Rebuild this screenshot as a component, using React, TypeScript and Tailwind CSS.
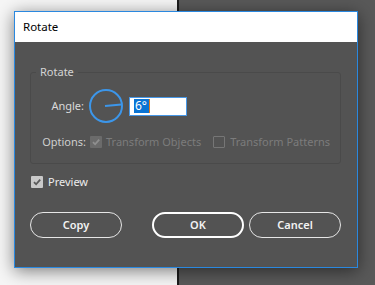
function Check({ tone }: { tone: 'disabled' | 'light' | 'empty' }) {
  if (tone === 'empty') {
    return <span className="block size-3 shrink-0 rounded-[1px] border border-[#767676]" />
  }
  const box = tone === 'light' ? 'bg-[#c9c9c9]' : 'bg-[#6b6b6b]'
  const mark = tone === 'light' ? '#5a5a5a' : '#8f8f8f'
  return (
    <span className={`flex size-3 shrink-0 items-center justify-center rounded-[1px] ${box}`}>
      <svg width="10" height="10" viewBox="0 0 10 10" aria-hidden>
        <path d="M2 5.2 L4.1 7.3 L8.2 2.6" fill="none" stroke={mark} strokeWidth="1.8" />
      </svg>
    </span>
  )
}

function AngleDial() {
  return (
    <svg width="36" height="36" viewBox="0 0 36 36" className="shrink-0" aria-hidden>
      <circle cx="18" cy="18" r="16" fill="none" stroke="#3c96ea" strokeWidth="2" />
      <line x1="17" y1="18.1" x2="33.5" y2="16.4" stroke="#3c96ea" strokeWidth="2" />
    </svg>
  )
}

export default function App() {
  return (
    <div
      className="relative flex h-[285px] w-[375px] overflow-hidden"
      style={{ fontFamily: '"Noto Sans", "Open Sans", sans-serif' }}
    >
      <div className="w-[177px] bg-[#f6f6f6]" />
      <div className="w-[2px] bg-[#1c1c1c]" />
      <div className="flex-1 bg-[#595959]" />

      <div className="absolute left-[14px] top-[11px] flex h-[257px] w-[344px] flex-col border border-[#2a88df] bg-[#535353] shadow-[0_3px_16px_rgba(0,0,0,0.5)]">
        <div className="flex h-[30px] items-center bg-white pl-[8px] text-[11.5px] text-black">Rotate</div>

        <fieldset className="ml-[15px] mt-[23px] w-[311px] rounded-[3px] border border-[#4a4a4a] pb-[14px]">
          <legend className="ml-[5px] px-[4px] text-[11px] leading-[14px] text-[#d4d4d4]">Rotate</legend>

          <div className="mt-[9px] flex items-center">
            <span className="w-[53px] text-right text-[11px] text-[#dadada]">Angle:</span>
            <span className="ml-[4px]">
              <AngleDial />
            </span>
            <div className="ml-[5px] flex h-[19px] w-[58px] items-center border border-[#4797e6] bg-white pl-[4px]">
              <span className="flex h-[14px] items-center bg-[#0a74d4] pl-[1px] pr-[2px] text-[12px] leading-none text-white">
                6°
              </span>
              <span className="h-[14px] w-px bg-[#e07a1e]" />
            </div>
          </div>

          <div className="mt-[11px] flex h-[14px] items-center text-[11px]">
            <span className="w-[55px] text-right text-[#cfcfcf]">Options:</span>
            <span className="ml-[4px]">
              <Check tone="disabled" />
            </span>
            <span className="ml-[4px] text-[#7c7c7c]">Transform Objects</span>
            <span className="ml-[12px]">
              <Check tone="empty" />
            </span>
            <span className="ml-[5px] text-[#7c7c7c]">Transform Patterns</span>
          </div>
        </fieldset>

        <div className="ml-[16px] mt-[11px] flex h-[14px] items-center">
          <Check tone="light" />
          <span className="ml-[5px] text-[11px] text-[#ececec]">Preview</span>
        </div>

        <div className="ml-[15px] mt-[23px] flex">
          <button className="h-[26px] w-[92px] rounded-full border-[1.5px] border-[#e6e6e6] text-[11px] font-semibold text-[#f2f2f2]">
            Copy
          </button>
          <button className="ml-[30px] h-[26px] w-[92px] rounded-full border-2 border-white text-[11px] font-semibold text-[#f2f2f2]">
            OK
          </button>
          <button className="ml-[5px] h-[26px] w-[92px] rounded-full border-[1.5px] border-[#e6e6e6] text-[11px] font-semibold text-[#f2f2f2]">
            Cancel
          </button>
        </div>
      </div>
    </div>
  )
}
